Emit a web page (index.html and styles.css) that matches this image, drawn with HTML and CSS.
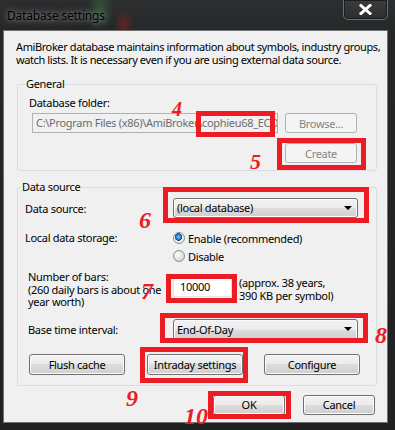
FILE: index.html
```html
<!DOCTYPE html>
<html>
<head>
    <title>Database settings</title>
    <meta charset="UTF-8">
    <link rel="stylesheet" href="styles.css">
</head>
<body>
    <div class="window">
        <div class="titlebar">
            <span class="title">Database settings</span>
            <div class="close">
                <svg width="13" height="11" viewBox="0 0 13 11">
                    <path d="M2 1.5 L11 9.5 M11 1.5 L2 9.5" stroke="#ffffff" stroke-width="3" stroke-linecap="square"/>
                </svg>
            </div>
        </div>

        <div class="client">
            <p class="intro">AmiBroker database maintains information about symbols, industry groups,<br>watch lists. It is necessary even if you are using external data source.</p>

            <fieldset class="group general">
                <legend>General</legend>
                <div class="field-label">Database folder:</div>
                <div class="folder-row">
                    <div class="textbox disabled folder">C:\Program Files (x86)\AmiBroker\cophieu68_ECO</div>
                    <button class="btn small" disabled>Browse...</button>
                </div>
                <div class="create-row">
                    <button class="btn small" disabled>Create</button>
                </div>
            </fieldset>

            <fieldset class="group source">
                <legend>Data source</legend>
                <div class="row row-source">
                    <span class="label">Data source:</span>
                    <div class="combo">(local database)<span class="arrow"></span></div>
                </div>
                <div class="row row-storage">
                    <span class="label">Local data storage:</span>
                    <div class="radios">
                        <div class="radio-item"><span class="radio checked"></span>Enable (recommended)</div>
                        <div class="radio-item"><span class="radio"></span>Disable</div>
                    </div>
                </div>
                <div class="row row-bars">
                    <span class="label indent">Number of bars:<br>(260 daily bars is about one<br>year worth)</span>
                    <div class="textbox bars">10000</div>
                    <span class="approx">(approx. 38 years,<br>390 KB per symbol)</span>
                </div>
                <div class="row row-interval">
                    <span class="label indent">Base time interval:</span>
                    <div class="combo tall">End-Of-Day<span class="arrow"></span></div>
                </div>
                <div class="row row-buttons">
                    <button class="btn wide">Flush cache</button>
                    <button class="btn wide">Intraday settings</button>
                    <button class="btn wide">Configure</button>
                </div>
            </fieldset>

            <div class="dialog-buttons">
                <button class="btn small">OK</button>
                <button class="btn small">Cancel</button>
            </div>
        </div>

        <!-- annotations drawn on top of the screenshot -->
        <div class="mark mark4"></div>
        <div class="mark mark5"></div>
        <div class="mark mark6"></div>
        <div class="mark mark7"></div>
        <div class="mark mark8"></div>
        <div class="mark mark9"></div>
        <div class="mark mark10"></div>
        <span class="num num4">4</span>
        <span class="num num5">5</span>
        <span class="num num6">6</span>
        <span class="num num7">7</span>
        <span class="num num8">8</span>
        <span class="num num9">9</span>
        <span class="num num10">10</span>
    </div>
</body>
</html>
```

FILE: styles.css
```css
body {
    margin: 0;
    background: #1d1f20;
    font-family: "Noto Sans", "Segoe UI", sans-serif;
    font-size: 11px;
    letter-spacing: -0.3px;
    color: #000;
}
.window {
    position: relative;
    width: 395px;
    height: 430px;
    overflow: hidden;
    background:
        radial-gradient(ellipse 14px 22px at 100px 8px, rgba(60, 140, 70, 0.45), transparent),
        radial-gradient(ellipse 10px 14px at 124px 24px, rgba(170, 30, 30, 0.45), transparent),
        linear-gradient(#2c2e2f, #242627 40px, #1f2122);
}
.titlebar {
    height: 30px;
    display: flex;
    justify-content: space-between;
    align-items: flex-start;
}
.title {
    padding: 8px 0 0 7px;
    font-size: 12px;
    line-height: 16px;
    letter-spacing: -0.2px;
    color: #000;
    text-shadow: 0 0 4px #8a8a8a, 0 0 8px #6a6a6a, 0 0 12px #5a5a5a;
}
.close {
    width: 43px;
    height: 19px;
    margin-right: 7px;
    border: 1px solid #6c6e6f;
    border-top: none;
    border-radius: 0 0 5px 5px;
    box-shadow: inset 0 0 0 1px #1c1d1e;
    background: linear-gradient(#3a3c3d, #2b2d2e);
    display: flex;
    align-items: center;
    justify-content: center;
}
.client {
    margin-left: 3px;
    width: 383px;
    height: 391px;
    border: 1px solid #6f7172;
    background: #f0f0f0;
}
.intro {
    margin: 0;
    padding: 9px 0 0 12px;
    line-height: 13px;
    letter-spacing: -0.4px;
    white-space: nowrap;
}
.group {
    box-sizing: border-box;
    width: 360px;
    margin: 0 0 0 13px;
    border: 1px solid #d5dfe5;
    border-radius: 3px;
    min-width: 0;
}
.group legend {
    padding: 0 1px;
    margin-left: -4px;
    line-height: 14px;
}
.general {
    margin-top: 11px;
    padding: 0 19px 7px 11px;
}
.field-label {
    margin-top: 5px;
    line-height: 14px;
}
.folder-row {
    margin-top: 3px;
    display: flex;
    gap: 7px;
}
.textbox {
    box-sizing: border-box;
    height: 20px;
    border: 1px solid #abadb3;
    border-color: #abadb3 #dbdfe6 #e3e9ef #e2e3ea;
    background: #fff;
    line-height: 18px;
    white-space: nowrap;
    overflow: hidden;
}
.textbox.disabled {
    border-color: #adb2b5;
    background: #f0f0f0;
    color: #6d6d6d;
}
.folder {
    width: 246px;
    margin-left: 3px;
    padding-left: 3px;
}
.create-row {
    margin-top: 10px;
    display: flex;
    justify-content: flex-end;
}
.btn {
    box-sizing: border-box;
    height: 20px;
    padding: 0;
    border: 1px solid #707070;
    border-radius: 3px;
    background: linear-gradient(#f2f2f2 0%, #ebebeb 50%, #dddddd 50%, #cfcfcf 100%);
    box-shadow: inset 0 0 0 1px #fbfbfb;
    font-family: inherit;
    font-size: 11px;
    letter-spacing: -0.3px;
    color: #000;
    white-space: nowrap;
}
.btn:disabled {
    border-color: #adb2b5;
    background: #f4f4f4;
    box-shadow: none;
    color: #838383;
}
.btn.small {
    width: 72px;
}
.btn.wide {
    width: 96px;
    height: 21px;
}
.source {
    margin-top: 9px;
    padding: 0 0 10px 7px;
}
.row {
    display: flex;
}
.label {
    width: 148px;
    flex-shrink: 0;
    white-space: nowrap;
}
.label.indent {
    width: 145px;
    padding-left: 3px;
}
.row-source {
    margin-top: 4px;
    align-items: center;
}
.combo {
    position: relative;
    box-sizing: border-box;
    width: 185px;
    height: 20px;
    padding-left: 3px;
    border: 1px solid #707070;
    border-radius: 3px;
    background: linear-gradient(#f2f2f2 0%, #ebebeb 50%, #dddddd 50%, #cfcfcf 100%);
    box-shadow: inset 0 0 0 1px #fbfbfb;
    line-height: 18px;
}
.combo.tall {
    height: 21px;
    line-height: 19px;
}
.arrow {
    position: absolute;
    right: 5px;
    top: 50%;
    margin-top: -2px;
    border-left: 4px solid transparent;
    border-right: 4px solid transparent;
    border-top: 4px solid #000;
}
.row-storage {
    margin-top: 11px;
}
.row-storage .label {
    line-height: 18px;
}
.radio-item {
    display: flex;
    align-items: center;
    gap: 3px;
    height: 18px;
    white-space: nowrap;
}
.radio {
    box-sizing: border-box;
    width: 12px;
    height: 12px;
    border: 1px solid #8f8f8f;
    border-radius: 50%;
    background: radial-gradient(circle at 40% 35%, #ffffff, #d8d8d8 70%, #c4c4c4);
}
.radio.checked {
    background: radial-gradient(circle at 45% 40%, #8ad8ff 0, #2a8ad4 2px, #10508e 3.6px, #f4f4f4 4px, #dcdcdc 100%);
}
.row-bars {
    margin-top: 6px;
    line-height: 12.5px;
}
.textbox.bars {
    width: 59px;
    flex-shrink: 0;
    margin-top: 6px;
    padding-left: 6px;
}
.approx {
    margin: 6px 0 0 7px;
    white-space: nowrap;
}
.row-interval {
    margin-top: 10px;
    align-items: center;
}
.row-buttons {
    margin-top: 14px;
    margin-left: 4px;
    gap: 22px;
}
.row-buttons .btn:last-child {
    margin-left: -1px;
}
.dialog-buttons {
    margin-top: 9px;
    padding-right: 12px;
    display: flex;
    justify-content: flex-end;
    gap: 18px;
}

/* red annotation boxes and step numbers */
.mark {
    position: absolute;
    box-sizing: border-box;
    border: 5px solid #ed1c24;
}
.mark4 { left: 196px; top: 111px; width: 79px; height: 26px; }
.mark5 { left: 277px; top: 138px; width: 89px; height: 32px; }
.mark6 { left: 163px; top: 187px; width: 206px; height: 36px; }
.mark7 { left: 166px; top: 274px; width: 71px; height: 29px; }
.mark8 { left: 160px; top: 313px; width: 208px; height: 30px; }
.mark9 { left: 140px; top: 347px; width: 108px; height: 36px; }
.mark10 { left: 208px; top: 391px; width: 83px; height: 28px; }
.num {
    position: absolute;
    font-family: "Liberation Serif", serif;
    font-weight: bold;
    font-style: italic;
    font-size: 24px;
    line-height: 24px;
    letter-spacing: 0;
    color: #ed1c24;
}
.num4 { left: 172px; top: 99px; font-size: 20px; line-height: 20px; }
.num5 { left: 250px; top: 151px; font-size: 22px; line-height: 22px; }
.num6 { left: 139px; top: 208px; }
.num7 { left: 141px; top: 279px; }
.num8 { left: 375px; top: 323px; }
.num9 { left: 126px; top: 386px; }
.num10 { left: 184px; top: 404px; }
```
